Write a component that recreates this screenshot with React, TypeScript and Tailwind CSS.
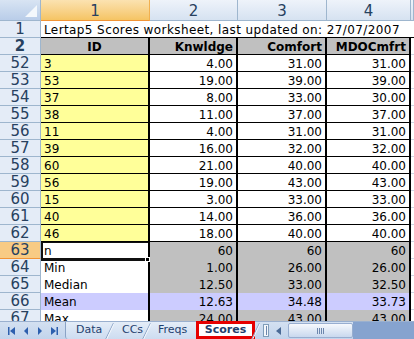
const dataRows = [
  ['52', '3', '4.00', '31.00', '31.00'],
  ['53', '53', '19.00', '39.00', '39.00'],
  ['54', '37', '8.00', '33.00', '30.00'],
  ['55', '38', '11.00', '37.00', '37.00'],
  ['56', '11', '4.00', '31.00', '31.00'],
  ['57', '39', '16.00', '32.00', '32.00'],
  ['58', '60', '21.00', '40.00', '40.00'],
  ['59', '56', '19.00', '43.00', '43.00'],
  ['60', '15', '3.00', '33.00', '33.00'],
  ['61', '40', '14.00', '36.00', '36.00'],
  ['62', '46', '18.00', '40.00', '40.00'],
];

const statRows = [
  ['63', 'n', '60', '60', '60'],
  ['64', 'Min', '1.00', '26.00', '26.00'],
  ['65', 'Median', '12.50', '33.00', '32.50'],
  ['66', 'Mean', '12.63', '34.48', '33.73'],
  ['67', 'Max', '24.00', '43.00', '43.00'],
];

const rowHdr =
  'w-[41px] shrink-0 h-[17px] border-r border-b border-[#9eb6ce] text-center text-[15px] leading-[17px] text-[#27415f]';
const cell = 'h-[17px] shrink-0 overflow-hidden whitespace-nowrap pt-[2px] leading-[15px]';

function RowHeader({ n, active }: { n: string; active?: boolean }) {
  return (
    <div className={`${rowHdr} ${active ? 'bg-[#f8cb84] border-b-[#f29436]' : 'bg-[#e4ecf7]'}`}>{n}</div>
  );
}

function ColHeaders() {
  const base =
    'h-[21px] shrink-0 border-r border-b border-[#9eb6ce] text-center text-[15px] leading-[20px] pt-[1px] text-[#27415f] bg-gradient-to-b from-[#eef3fa] to-[#d6e2f1]';
  return (
    <div className="flex">
      <div className="relative w-[41px] h-[21px] shrink-0 border-r border-b border-[#9eb6ce] bg-gradient-to-b from-[#d8e4f3] to-[#b9cde9]">
        <svg className="absolute right-[3px] bottom-[3px]" width="12" height="12" viewBox="0 0 12 12">
          <polygon points="12,0 12,12 0,12" fill="#f4f8fc" />
        </svg>
      </div>
      <div className="w-[109px] h-[21px] shrink-0 border-r border-b border-r-[#f2b04f] border-b-[#f29436] text-center text-[15px] leading-[20px] pt-[1px] text-[#27415f] bg-gradient-to-b from-[#fbe2b0] to-[#f5c463]">
        1
      </div>
      <div className={`${base} w-[88px]`}>2</div>
      <div className={`${base} w-[89px]`}>3</div>
      <div className={`${base} w-[84px]`}>4</div>
      <div className={`${base} flex-1`}></div>
    </div>
  );
}

function DataRow({ r }: { r: string[] }) {
  return (
    <div className="flex">
      <RowHeader n={r[0]} />
      <div className={`${cell} w-[109px] pl-[3px] bg-[#ffff99] border-r-2 border-b border-black`}>{r[1]}</div>
      <div className={`${cell} w-[88px] pr-[3px] text-right bg-white border-r-2 border-b border-black`}>{r[2]}</div>
      <div className={`${cell} w-[89px] pr-[3px] text-right bg-white border-r-2 border-b border-black`}>{r[3]}</div>
      <div className={`${cell} w-[84px] pr-[3px] text-right bg-white border-r-2 border-b border-black`}>{r[4]}</div>
      <div className="h-[17px] flex-1 border-b border-[#d0d7e5]"></div>
    </div>
  );
}

function StatRow({ r }: { r: string[] }) {
  const mean = r[1] === 'Mean';
  const fill = mean ? 'bg-[#ccccff]' : 'bg-[#c0c0c0]';
  return (
    <div className="flex">
      <RowHeader n={r[0]} active={r[0] === '63'} />
      <div className={`${cell} w-[109px] pl-[3px] border-r-2 border-black ${mean ? 'bg-[#ccccff]' : 'bg-white'}`}>
        {r[1]}
      </div>
      <div className={`${cell} w-[88px] pr-[3px] text-right border-r-2 border-black ${fill}`}>{r[2]}</div>
      <div className={`${cell} w-[89px] pr-[3px] text-right border-r-2 border-black ${fill}`}>{r[3]}</div>
      <div className={`${cell} w-[84px] pr-[3px] text-right border-r-2 border-black ${fill}`}>{r[4]}</div>
      <div className="h-[17px] flex-1 border-b border-[#d0d7e5]"></div>
    </div>
  );
}

function NavButtons() {
  const c = '#2d5fae';
  return (
    <div className="w-[65px] shrink-0 flex items-center pl-[8px] gap-[8px]">
      <svg width="7" height="8" viewBox="0 0 7 8">
        <rect x="0" y="0" width="1.5" height="8" fill={c} />
        <polygon points="7,0 7,8 2,4" fill={c} />
      </svg>
      <svg width="6" height="8" viewBox="0 0 6 8">
        <polygon points="5,0 5,8 1,4" fill={c} />
      </svg>
      <svg width="6" height="8" viewBox="0 0 6 8">
        <polygon points="1,0 1,8 5,4" fill={c} />
      </svg>
      <svg width="7" height="8" viewBox="0 0 7 8">
        <polygon points="0,0 0,8 5,4" fill={c} />
        <rect x="5.5" y="0" width="1.5" height="8" fill={c} />
      </svg>
    </div>
  );
}

function Slant() {
  return (
    <svg className="absolute left-[-4px] top-0" width="9" height="18" viewBox="0 0 9 18">
      <line x1="0.5" y1="17.5" x2="8.5" y2="1" stroke="#8aa3c6" strokeWidth="1" />
      <line x1="1.5" y1="17.5" x2="9.5" y2="1" stroke="#f3f7fc" strokeWidth="1" />
    </svg>
  );
}

function TabBar() {
  const tab = 'relative h-[17px] shrink-0 text-[11px] leading-[16px] text-[#1f3f6e]';
  return (
    <div className="flex h-[18px] border-t border-[#9ab0cf] bg-gradient-to-b from-[#d3e0f1] to-[#c2d4ec]">
      <NavButtons />
      <div className="flex h-[17px] bg-gradient-to-b from-[#e4edf8] to-[#cddcf0] border-l border-[#8aa3c6] rounded-bl-[3px]">
        <div className={`${tab} w-[43px] pl-[10px]`}>Data</div>
        <div className={`${tab} w-[37px] pl-[13px]`}>
          <Slant />
          CCs
        </div>
        <div className={`${tab} w-[50px] pl-[12px]`}>
          <Slant />
          Freqs
        </div>
      </div>
      <div className="h-[18px] w-[59px] shrink-0 -mt-px border-[3px] border-[#e60000] bg-white flex items-center justify-center text-[11px] font-bold leading-[12px] text-[#1f3f6e]">
        Scores
      </div>
      <div className="relative w-[8px] shrink-0">
        <Slant />
      </div>
      <div className="w-[6px] h-[13px] mt-[2px] shrink-0 border border-[#7f9db9] bg-[#f4f7fb] flex justify-center">
        <div className="w-px h-[9px] mt-[1px] bg-[#6d87ad]"></div>
      </div>
      <div className="flex-1 flex items-center">
        <div className="w-[19px] flex justify-center">
          <svg width="5" height="8" viewBox="0 0 5 8">
            <polygon points="5,0 5,8 0,4" fill="#4a6a96" />
          </svg>
        </div>
        <div className="w-[65px] h-[15px] rounded-[2px] border border-[#98aed0] bg-gradient-to-b from-[#f7f9fd] via-[#dfe8f5] to-[#c9d8ee] flex items-center justify-center gap-px">
          <div className="w-px h-[6px] bg-[#6d86ad]"></div>
          <div className="w-px h-[6px] bg-[#6d86ad]"></div>
          <div className="w-px h-[6px] bg-[#6d86ad]"></div>
          <div className="w-px h-[6px] bg-[#6d86ad]"></div>
        </div>
        <div className="flex-1 h-[17px] bg-[#86a3cf]"></div>
      </div>
    </div>
  );
}

export default function App() {
  return (
    <div className="w-[414px] h-[339px] overflow-hidden bg-white font-['DejaVu_Sans',sans-serif] text-[12px] text-black">
      <div className="relative h-[321px] overflow-hidden">
        <ColHeaders />
        <div className="flex">
          <RowHeader n="1" />
          <div className={`${cell} flex-1 pl-[3px] tracking-[0.4px] border-b border-black`}>
            Lertap5 Scores worksheet, last updated on: 27/07/2007
          </div>
        </div>
        <div className="flex font-bold">
          <RowHeader n="2" />
          <div className={`${cell} w-[109px] text-center bg-[#c0c0c0] border-r-2 border-b border-black`}>ID</div>
          <div className={`${cell} w-[88px] pr-[3px] text-right bg-[#c0c0c0] border-r-2 border-b border-black`}>Knwldge</div>
          <div className={`${cell} w-[89px] pr-[3px] text-right bg-[#c0c0c0] border-r-2 border-b border-black`}>Comfort</div>
          <div className={`${cell} w-[84px] pr-[3px] text-right bg-[#c0c0c0] border-r-2 border-b border-black`}>MDOCmfrt</div>
          <div className="h-[17px] flex-1 border-b border-[#d0d7e5]"></div>
        </div>
        {dataRows.map((r) => (
          <DataRow key={r[0]} r={r} />
        ))}
        {statRows.map((r) => (
          <StatRow key={r[0]} r={r} />
        ))}
        {/* active cell outline */}
        <div className="absolute left-[41px] top-[242px] w-[107px] h-[19px] border-l-2 border-t border-b-[3px] border-[#101010]"></div>
        <div className="absolute left-[145px] top-[257px] w-[5px] h-[5px] bg-black border border-white"></div>
      </div>
      <TabBar />
    </div>
  );
}
